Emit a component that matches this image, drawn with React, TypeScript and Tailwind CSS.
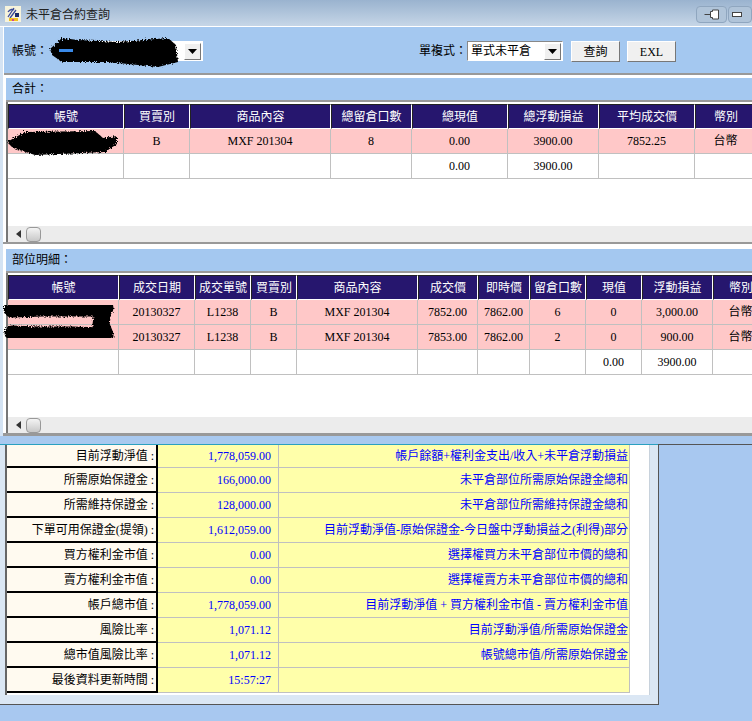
import type { ReactNode } from 'react';

const CELL = 'flex h-[25px] items-center justify-center border-r border-b border-[#c0c0c0] text-black';

const SUM_HEAD = ['帳號', '買賣別', '商品內容', '總留倉口數', '總現值', '總浮動損益', '平均成交價', '幣別'];
const SUM_ROWS = [
  ['', 'B', 'MXF 201304', '8', '0.00', '3900.00', '7852.25', '台幣'],
  ['', '', '', '', '0.00', '3900.00', '', ''],
];
const DETAIL_HEAD = ['帳號', '成交日期', '成交單號', '買賣別', '商品內容', '成交價', '即時價', '留倉口數', '現值', '浮動損益', '幣別'];
const DETAIL_ROWS = [
  ['', '20130327', 'L1238', 'B', 'MXF 201304', '7852.00', '7862.00', '6', '0', '3,000.00', '台幣'],
  ['', '20130327', 'L1238', 'B', 'MXF 201304', '7853.00', '7862.00', '2', '0', '900.00', '台幣'],
  ['', '', '', '', '', '', '', '', '0.00', '3900.00', ''],
];

const SUMMARY = [
  ['目前浮動淨值', '1,778,059.00', '帳戶餘額+權利金支出/收入+未平倉浮動損益'],
  ['所需原始保證金', '166,000.00', '未平倉部位所需原始保證金總和'],
  ['所需維持保證金', '128,000.00', '未平倉部位所需維持保證金總和'],
  ['下單可用保證金(提領)', '1,612,059.00', '目前浮動淨值-原始保證金-今日盤中浮動損益之(利得)部分'],
  ['買方權利金市值', '0.00', '選擇權買方未平倉部位市價的總和'],
  ['賣方權利金市值', '0.00', '選擇權賣方未平倉部位市價的總和'],
  ['帳戶總市值', '1,778,059.00', '目前浮動淨值 + 買方權利金市值 - 賣方權利金市值'],
  ['風險比率', '1,071.12', '目前浮動淨值/所需原始保證金'],
  ['總市值風險比率', '1,071.12', '帳號總市值/所需原始保證金'],
  ['最後資料更新時間', '15:57:27', ''],
];

function Arrow() {
  return (
    <span className="flex h-[17px] w-[17px] shrink-0 items-center justify-center border border-[#777] border-t-white border-l-white bg-[#f0f0f0]">
      <svg width="9" height="5" viewBox="0 0 9 5">
        <path d="M0 0h9L4.5 5z" fill="#000" />
      </svg>
    </span>
  );
}

function Scrollbar() {
  return (
    <div className="flex h-4 shrink-0 items-center bg-[#ececec] pl-2">
      <svg width="5" height="8" viewBox="0 0 5 8">
        <path d="M5 0v8L0 4z" fill="#333" />
      </svg>
      <div className="ml-[5px] h-[15px] w-[15px] rounded-sm border border-[#999] bg-gradient-to-b from-[#f4f4f4] to-[#c8c8c8]" />
    </div>
  );
}

function Section(props: {
  label: string;
  cols: string;
  head: string[];
  rows: string[][];
  frame: string;
  gap: string;
  children: ReactNode;
}) {
  return (
    <div className={`pl-[2px] ${props.gap}`}>
      <div className="flex h-[22px] items-center bg-[#a4c8f0] pl-[6px] text-black">{props.label}</div>
      <div className="h-[2px] bg-[#999]" />
      <div className={`flex flex-col border-l-2 border-[#777] bg-white pt-[2px] ${props.frame}`}>
        <div className="relative">
          <div className={`grid ${props.cols}`}>
            {props.head.map((h, i) => (
              <div
                key={i}
                className="flex h-[25px] items-center justify-center border border-[#222] border-r-white border-b-white bg-[#26166e] whitespace-nowrap text-white"
              >
                {h}
              </div>
            ))}
            {props.rows.map((row, r) =>
              row.map((c, i) => (
                <div key={`${r}-${i}`} className={`${CELL} ${row[1] || row[2] ? 'bg-[#ffc8c8]' : 'bg-white'}`}>
                  {c}
                </div>
              )),
            )}
          </div>
          {props.children}
        </div>
        <div className="flex-1" />
        <Scrollbar />
      </div>
    </div>
  );
}

export default function App() {
  return (
    <div className="flex h-[721px] w-[752px] flex-col overflow-hidden bg-[#a8c8f0] font-['Liberation_Serif','Noto_Sans_CJK_TC',serif] text-[12px] leading-none">
      {/* 隱藏濾鏡：塗黑的粗糙邊 */}
      <svg className="absolute h-0 w-0">
        <filter id="rough">
          <feTurbulence type="fractalNoise" baseFrequency="0.7" numOctaves="2" seed="4" />
          <feDisplacementMap in="SourceGraphic" scale="5" />
        </filter>
      </svg>

      {/* 標題列 */}
      <div className="flex h-[26px] shrink-0 items-center bg-gradient-to-b from-[#9ab3cf] to-[#c6d6e7] pt-[2px] pl-[5px]">
        <svg width="16" height="16" viewBox="0 0 16 16">
          <rect width="16" height="16" fill="#f6f3dc" />
          <path d="M3 11L9 2M5 12L11 4M3 6c2-3 5-3 6-2" stroke="#3a4a9a" strokeWidth="1.3" fill="none" />
          <rect x="10" y="7" width="4" height="4" fill="#1a2a6a" />
          <rect x="4" y="12" width="9" height="3" fill="#f0c020" />
          <rect x="7" y="13" width="2" height="2" fill="#d040a0" />
        </svg>
        <span className="mt-px ml-[5px] text-[#222]">未平倉合約查詢</span>
        <div className="ml-auto flex gap-px">
          <div className="flex h-[17px] w-[31px] items-center justify-center rounded-sm border border-[#8fa6bf] bg-[#b0c4d9]">
            <svg width="16" height="11" viewBox="0 0 16 11">
              <path d="M0.5 5.5H6M6.5 2.5h2V1h6v9h-6V8.5h-2z" stroke="#444" strokeWidth="1" fill="#fff" />
            </svg>
          </div>
          <div className="flex h-[17px] w-[24px] items-center rounded-sm border border-[#8fa6bf] bg-[#b0c4d9] pl-[3px]">
            <span className="h-[5px] w-[10px] border border-[#444] bg-white" />
          </div>
        </div>
      </div>

      {/* 上方視窗 */}
      <div className="flex h-[410px] shrink-0 border-t border-white">
        <div className="w-[3px] shrink-0 bg-[#d4e3f3]" />
        <div className="min-w-0 flex-1 border-l border-white bg-white">
          {/* 查詢列 */}
          <div className="flex h-[48px] border-b-2 border-[#999] bg-[#a4c8f0] pt-[14px] pl-2 text-black">
            <span className="flex h-5 w-[36px] items-center whitespace-nowrap">帳號：</span>
            <div className="relative ml-[11px] flex h-5 w-[144px] shrink-0 items-center justify-end border border-white bg-white pr-[1px]">
              <Arrow />
              <svg className="absolute top-[-7px] left-[-12px]" width="134" height="36" viewBox="0 0 134 36">
                <path
                  d="M2 14L14 3L30 5L70 7L120 3L128 10L130 27L110 32L60 27L14 27L4 20Z"
                  fill="#000"
                  filter="url(#rough)"
                />
                <path d="M11 14h14v3H11z" fill="#3a8ae8" />
              </svg>
            </div>
            <span className="ml-[216px] flex h-5 w-[48px] shrink-0 items-center whitespace-nowrap">單複式：</span>
            <div className="flex h-5 w-[96px] shrink-0 items-center justify-between border border-[#888] border-r-white border-b-white bg-white pr-[1px] pl-[3px]">
              <span>單式未平倉</span>
              <Arrow />
            </div>
            <button className="ml-2 h-[21px] w-[49px] shrink-0 border border-[#777] border-t-white border-l-white bg-[#f0f0f0]">查詢</button>
            <button className="ml-[7px] h-[21px] w-[49px] shrink-0 border border-[#777] border-t-white border-l-white bg-[#f0f0f0]">EXL</button>
          </div>

          <Section
            label="合計："
            cols="grid-cols-[116px_66px_141px_81px_96px_91px_96px_62px]"
            head={SUM_HEAD}
            rows={SUM_ROWS}
            frame="h-[140px]"
            gap="pt-[3px]"
          >
            <svg className="absolute top-[23px] left-[-3px]" width="114" height="32" viewBox="0 0 114 32">
              <path d="M2 15L20 5L90 4L98 11L112 9L112 17L100 25L30 28L8 21Z" fill="#000" filter="url(#rough)" />
            </svg>
          </Section>
          <div className="ml-[-1px] h-[2px] bg-[#999]" />

          <Section
            label="部位明細："
            cols="grid-cols-[111px_76px_56px_46px_121px_60px_52px_56px_56px_71px_56px]"
            head={DETAIL_HEAD}
            rows={DETAIL_ROWS}
            frame="h-[160px]"
            gap="pt-[5px]"
          >
            <svg className="absolute top-[22px] left-[-5px]" width="112" height="50" viewBox="0 0 112 50">
              <g filter="url(#rough)" stroke="#000" fill="none" strokeLinecap="round" strokeLinejoin="round">
                <path d="M9 12L40 11L75 11L102 11" strokeWidth="17" />
                <path d="M100 12L98 28L102 38" strokeWidth="17" />
                <path d="M100 38L70 37L35 37L9 36" strokeWidth="15" />
              </g>
            </svg>
          </Section>
          <div className="ml-[-1px] h-[3px] bg-[#999]" />
        </div>
      </div>

      {/* 藍色間隔 */}
      <div className="h-[8px] shrink-0 bg-[#a9c9ef]" />
      <div className="flex h-px shrink-0 bg-[#555]">
        <div className="w-[658px] bg-[#2aa0c0]" />
      </div>

      {/* 下方視窗 */}
      <div className="h-[260px] w-[659px] shrink-0 border-r border-b border-r-[#555] border-b-[#555] bg-[#dbe7f4] pl-[5px]">
        <div className="flex h-[250px] w-[645px] border-r border-l-2 border-r-[#c8d2dc] border-l-[#666] bg-white">
          <div className="grid w-[623px] grid-cols-[151px_121px_351px] content-start">
            {SUMMARY.map((row, i) => (
              <div key={row[0]} className="contents">
                <div className={`flex items-center justify-end border-r-2 border-b-2 border-black bg-[#fffaf0] pr-[2px] text-black ${i === 0 ? 'h-[23px]' : 'h-[25px]'}`}>
                  {row[0]} :
                </div>
                <div className={`flex items-center justify-end border-r border-b border-[#c0c0c0] bg-[#ffffaa] pr-[7px] text-[#0000ff] ${i === 0 ? 'h-[23px]' : 'h-[25px]'}`}>
                  {row[1]}
                </div>
                <div className={`flex items-center justify-end border-r border-b border-[#c0c0c0] bg-[#ffffaa] pr-px whitespace-nowrap text-[#0000ff] ${i === 0 ? 'h-[23px]' : 'h-[25px]'}`}>
                  {row[2]}
                </div>
              </div>
            ))}
          </div>
        </div>
      </div>
    </div>
  );
}
